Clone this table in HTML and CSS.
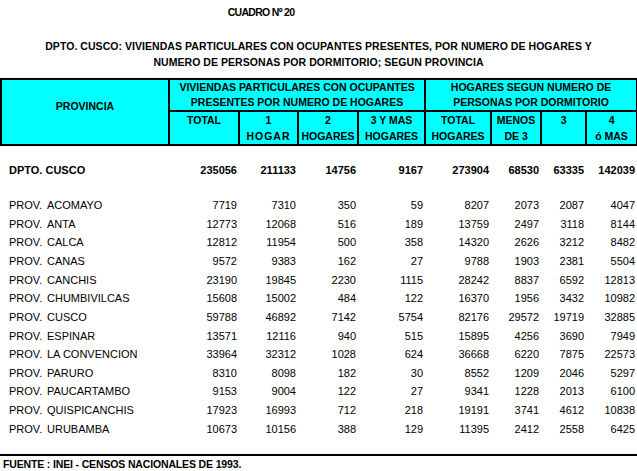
FILE: index.html
```html
<!DOCTYPE html>
<html>
<head>
<meta charset="utf-8">
<link rel="stylesheet" href="styles.css">
</head>
<body>
<div class="page">
  <div class="title">CUADRO Nº 20</div>
  <div class="subtitle">DPTO. CUSCO: VIVIENDAS PARTICULARES CON OCUPANTES PRESENTES, POR NUMERO DE HOGARES Y<br>NUMERO DE PERSONAS POR DORMITORIO; SEGUN PROVINCIA</div>
  <table class="tbl">
    <colgroup>
      <col class="c0"><col class="c1"><col class="c2"><col class="c3"><col class="c4"><col class="c5"><col class="c6"><col class="c7"><col class="c8">
    </colgroup>
    <thead>
      <tr class="h1">
        <th rowspan="2" class="prov">PROVINCIA</th>
        <th colspan="4">VIVIENDAS PARTICULARES CON OCUPANTES<br>PRESENTES POR NUMERO DE HOGARES</th>
        <th colspan="4">HOGARES SEGUN NUMERO DE<br>PERSONAS POR DORMITORIO</th>
      </tr>
      <tr class="h2">
        <th>TOTAL</th>
        <th>1<br><span class="wide">HOGAR</span></th>
        <th>2<br>HOGARES</th>
        <th>3 Y MAS<br>HOGARES</th>
        <th>TOTAL<br>HOGARES</th>
        <th>MENOS<br>DE 3</th>
        <th>3</th>
        <th>4<br>ó MAS</th>
      </tr>
    </thead>
    <tbody>
      <tr class="spacer"><td colspan="9"></td></tr>
      <tr class="dept"><td class="name">DPTO. CUSCO</td><td>235056</td><td>211133</td><td>14756</td><td>9167</td><td>273904</td><td>68530</td><td>63335</td><td>142039</td></tr>
      <tr class="spacer2"><td colspan="9"></td></tr>
      <tr><td class="name"><span class="pre">PROV.</span>ACOMAYO</td><td>7719</td><td>7310</td><td>350</td><td>59</td><td>8207</td><td>2073</td><td>2087</td><td>4047</td></tr>
      <tr><td class="name"><span class="pre">PROV.</span>ANTA</td><td>12773</td><td>12068</td><td>516</td><td>189</td><td>13759</td><td>2497</td><td>3118</td><td>8144</td></tr>
      <tr><td class="name"><span class="pre">PROV.</span>CALCA</td><td>12812</td><td>11954</td><td>500</td><td>358</td><td>14320</td><td>2626</td><td>3212</td><td>8482</td></tr>
      <tr><td class="name"><span class="pre">PROV.</span>CANAS</td><td>9572</td><td>9383</td><td>162</td><td>27</td><td>9788</td><td>1903</td><td>2381</td><td>5504</td></tr>
      <tr><td class="name"><span class="pre">PROV.</span>CANCHIS</td><td>23190</td><td>19845</td><td>2230</td><td>1115</td><td>28242</td><td>8837</td><td>6592</td><td>12813</td></tr>
      <tr><td class="name"><span class="pre">PROV.</span>CHUMBIVILCAS</td><td>15608</td><td>15002</td><td>484</td><td>122</td><td>16370</td><td>1956</td><td>3432</td><td>10982</td></tr>
      <tr><td class="name"><span class="pre">PROV.</span>CUSCO</td><td>59788</td><td>46892</td><td>7142</td><td>5754</td><td>82176</td><td>29572</td><td>19719</td><td>32885</td></tr>
      <tr><td class="name"><span class="pre">PROV.</span>ESPINAR</td><td>13571</td><td>12116</td><td>940</td><td>515</td><td>15895</td><td>4256</td><td>3690</td><td>7949</td></tr>
      <tr><td class="name"><span class="pre">PROV.</span>LA CONVENCION</td><td>33964</td><td>32312</td><td>1028</td><td>624</td><td>36668</td><td>6220</td><td>7875</td><td>22573</td></tr>
      <tr><td class="name"><span class="pre">PROV.</span>PARURO</td><td>8310</td><td>8098</td><td>182</td><td>30</td><td>8552</td><td>1209</td><td>2046</td><td>5297</td></tr>
      <tr><td class="name"><span class="pre">PROV.</span>PAUCARTAMBO</td><td>9153</td><td>9004</td><td>122</td><td>27</td><td>9341</td><td>1228</td><td>2013</td><td>6100</td></tr>
      <tr><td class="name"><span class="pre">PROV.</span>QUISPICANCHIS</td><td>17923</td><td>16993</td><td>712</td><td>218</td><td>19191</td><td>3741</td><td>4612</td><td>10838</td></tr>
      <tr><td class="name"><span class="pre">PROV.</span>URUBAMBA</td><td>10673</td><td>10156</td><td>388</td><td>129</td><td>11395</td><td>2412</td><td>2558</td><td>6425</td></tr>
    </tbody>
  </table>
  <div class="source">FUENTE : INEI - CENSOS NACIONALES DE 1993.</div>
</div>
</body>
</html>
```
FILE: styles.css
```css
html, body {
  margin: 0;
  padding: 0;
  background: #ffffff;
}
.page {
  width: 637px;
  height: 471px;
  font-family: "Liberation Sans", Arial, sans-serif;
  color: #000;
  overflow: hidden;
}
.title, .subtitle, .source {
  font-family: "Liberation Sans", Arial, sans-serif;
  font-weight: bold;
  font-size: 10.5px;
  text-align: center;
}
.title {
  line-height: 16px;
  padding-top: 4px;
  padding-right: 115px;
  height: 16px;
  letter-spacing: -0.7px;
}
.subtitle {
  line-height: 16px;
  margin-top: 18px;
  height: 32px;
  letter-spacing: 0.05px;
}
.tbl {
  margin-top: 8px;
  width: 636px;
  border-collapse: collapse;
  table-layout: fixed;
  font-size: 11px;
}
.c0 { width: 168px; }
.c1 { width: 70px; }
.c2 { width: 59px; }
.c3 { width: 60px; }
.c4 { width: 67px; }
.c5 { width: 66px; }
.c6 { width: 50px; }
.c7 { width: 45px; }
.c8 { width: 51px; }
.tbl th {
  background: #00ffff;
  border: 2px solid #000;
  font-weight: bold;
  font-size: 10.5px;
  line-height: 15px;
  padding: 0;
  text-align: center;
  white-space: nowrap;
}
.h1 th { height: 29px; vertical-align: middle; }
.h2 th { height: 30px; vertical-align: top; line-height: 16px; }
.h1 th.prov { vertical-align: top; padding-top: 18px; line-height: 16px; }
.wide { letter-spacing: 1px; }
.tbl td {
  padding: 0 2px 0 0;
  text-align: right;
  height: 18.67px;
  line-height: 14px;
  white-space: nowrap;
}
.tbl td.name {
  text-align: left;
  padding-left: 8px;
}
.pre {
  display: inline-block;
  width: 38px;
}
.spacer td { height: 14px; }
.dept td { font-weight: bold; height: 20px; }
.spacer2 td { height: 15.6px; }
.source {
  text-align: left;
  border-top: 2px solid #000;
  margin-top: 16px;
  padding-left: 3px;
  line-height: 16px;
  letter-spacing: -0.15px;
}
```
